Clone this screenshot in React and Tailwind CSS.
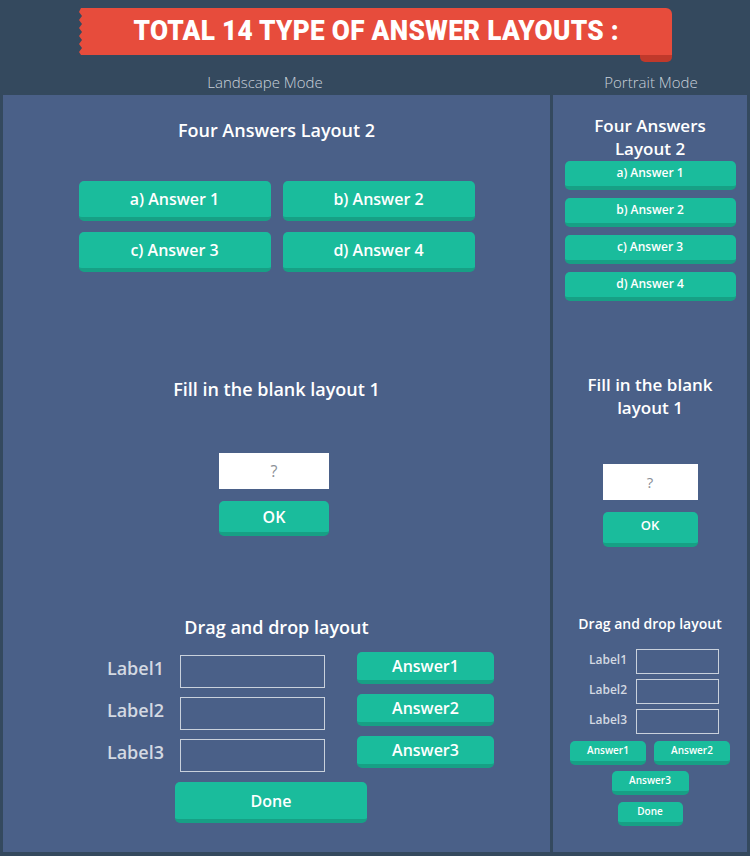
import React from 'react';

const font = { fontFamily: '"Open Sans", "Noto Sans", sans-serif' };

function Btn({ children, className = '' }) {
  return (
    <div
      className={`flex items-center justify-center rounded-[5px] bg-[#1abc9c] border-b-[4px] border-[#17a085] text-white font-semibold ${className}`}
    >
      {children}
    </div>
  );
}

function Banner() {
  return (
    <div className="relative ml-[78px] mt-[8px] w-[594px] h-[47px]">
      <div className="absolute inset-0 rounded-tr-[6px] bg-[#e74c3c]" />
      {/* zigzag torn edge */}
      <svg className="absolute left-0 top-0" width="6" height="47" viewBox="0 0 6 47">
        <path
          d="M0 0 H3 L1 4 L4 8 L1 12 L4 16 L1 20 L4 24 L1 28 L4 32 L1 36 L4 40 L1 44 L3 47 H0 Z"
          fill="#34495e"
        />
      </svg>
      {/* folded tab */}
      <div className="absolute right-0 top-[47px] w-[32px] h-[7px] rounded-b-[5px] bg-[#c0392b]" />
      <div className="relative flex h-full items-center justify-center pl-[2px]">
        <span
          className="text-white text-[27px] font-black tracking-[0.3px] inline-block scale-x-[0.97]"
          style={{ fontFamily: 'Roboto, "Liberation Sans", sans-serif' }}
        >
          TOTAL 14 TYPE OF ANSWER LAYOUTS :
        </span>
      </div>
    </div>
  );
}

function LandscapePanel() {
  return (
    <div className="w-[547px] h-[757px] bg-[#4a6088] flex flex-col items-center pt-[23px]">
      <h2 className="text-white text-[18px] leading-[24px] font-semibold">Four Answers Layout 2</h2>
      <div className="mt-[39px] grid grid-cols-2 gap-x-[12px] gap-y-[11px]">
        <Btn className="w-[192px] h-[40px] text-[16px]">a) Answer 1</Btn>
        <Btn className="w-[192px] h-[40px] text-[16px]">b) Answer 2</Btn>
        <Btn className="w-[192px] h-[40px] text-[16px]">c) Answer 3</Btn>
        <Btn className="w-[192px] h-[40px] text-[16px]">d) Answer 4</Btn>
      </div>

      <h2 className="mt-[105px] text-white text-[18px] leading-[24px] font-semibold">Fill in the blank layout 1</h2>
      <div className="mt-[52px] mr-[5px] w-[110px] h-[36px] bg-white flex items-center justify-center text-[#8a8f96] text-[16px]">
        ?
      </div>
      <Btn className="mt-[12px] mr-[5px] w-[110px] h-[35px] text-[16px]">OK</Btn>

      <h2 className="mt-[79px] text-white text-[18px] leading-[24px] font-semibold">Drag and drop layout</h2>
      <div className="mt-[13px] self-start ml-[101px] flex gap-[32px]">
        <div className="flex flex-col gap-[9px] pt-[3px]">
          {['Label1', 'Label2', 'Label3'].map((l) => (
            <div key={l} className="flex items-center gap-[16px]">
              <span className="w-[60px] text-right text-[#d3d9e2] text-[18px] leading-[20px] font-semibold pb-[8px]">{l}</span>
              <div className="w-[145px] h-[33px] border border-[#c9d1dc]" />
            </div>
          ))}
        </div>
        <div className="flex flex-col gap-[10px]">
          <Btn className="w-[137px] h-[32px] text-[16px]">Answer1</Btn>
          <Btn className="w-[137px] h-[32px] text-[16px]">Answer2</Btn>
          <Btn className="w-[137px] h-[32px] text-[16px]">Answer3</Btn>
        </div>
      </div>
      <Btn className="mt-[10px] self-start ml-[172px] w-[192px] h-[41px] text-[16px]">Done</Btn>
    </div>
  );
}

function PortraitPanel() {
  return (
    <div className="w-[194px] h-[757px] bg-[#4a6088] flex flex-col items-center pt-[19px]">
      <h2 className="text-white text-[17px] leading-[23px] font-semibold text-center">
        Four Answers
        <br />
        Layout 2
      </h2>
      <div className="mt-[1px] flex flex-col gap-[8px]">
        {['a) Answer 1', 'b) Answer 2', 'c) Answer 3', 'd) Answer 4'].map((a) => (
          <Btn key={a} className="w-[171px] h-[29px] text-[12px] pb-[2px]">{a}</Btn>
        ))}
      </div>

      <h2 className="mt-[72px] text-white text-[17px] leading-[23px] font-semibold text-center">
        Fill in the blank
        <br />
        layout 1
      </h2>
      <div className="mt-[45px] w-[95px] h-[36px] bg-white flex items-center justify-center text-[#8a8f96] text-[15px]">
        ?
      </div>
      <Btn className="mt-[12px] w-[95px] h-[35px] text-[13px] pb-[4px]">OK</Btn>

      <h2 className="mt-[67px] text-white text-[14px] leading-[19px] font-semibold">Drag and drop layout</h2>
      <div className="mt-[16px] self-start ml-[30px] flex flex-col gap-[5px]">
        {['Label1', 'Label2', 'Label3'].map((l) => (
          <div key={l} className="flex items-center gap-[9px]">
            <span className="w-[44px] text-right text-[#d3d9e2] text-[12px] leading-[16px] font-semibold pb-[4px]">{l}</span>
            <div className="w-[83px] h-[25px] border border-[#c9d1dc]" />
          </div>
        ))}
      </div>
      <div className="mt-[7px] flex gap-[8px]">
        <Btn className="w-[76px] h-[24px] text-[10px] pb-[2px]">Answer1</Btn>
        <Btn className="w-[76px] h-[24px] text-[10px] pb-[2px]">Answer2</Btn>
      </div>
      <Btn className="mt-[6px] w-[77px] h-[24px] text-[10px] pb-[2px]">Answer3</Btn>
      <Btn className="mt-[7px] w-[65px] h-[24px] text-[10px] pb-[2px]">Done</Btn>
    </div>
  );
}

export default function App() {
  return (
    <div className="w-[750px] h-[856px] bg-[#34495e] overflow-hidden" style={font}>
      <Banner />
      <div className="flex h-[40px] items-center text-[#c9d1db] text-[15px] font-light pt-[14px]">
        <div className="w-[530px] text-center">Landscape Mode</div>
        <div className="w-[180px] text-center ml-[31px]">Portrait Mode</div>
      </div>
      <div className="flex gap-[3px] pl-[3px]">
        <LandscapePanel />
        <PortraitPanel />
      </div>
    </div>
  );
}
